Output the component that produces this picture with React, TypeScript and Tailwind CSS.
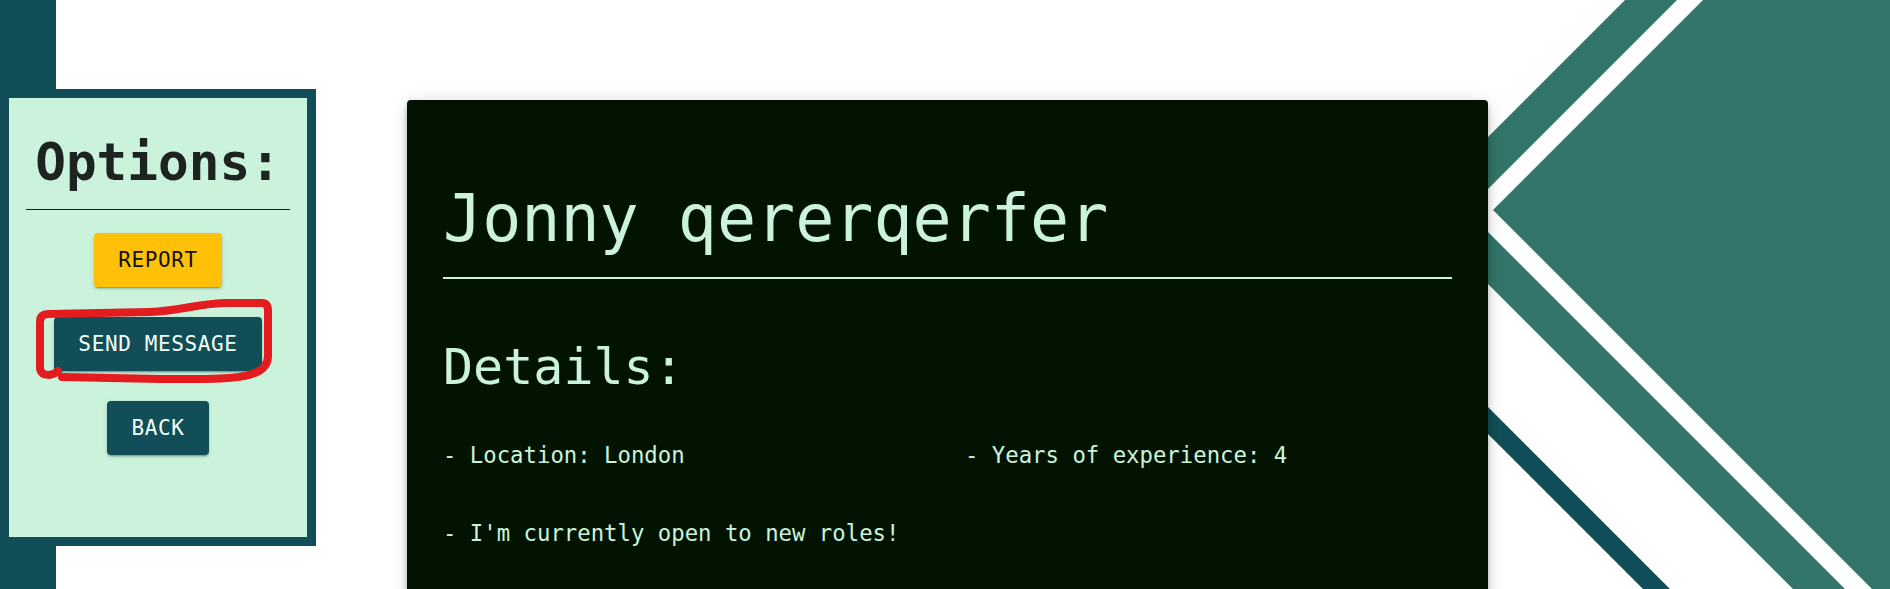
import React from "react";

const Scribble = () => (
  <svg
    className="pointer-events-none absolute left-[-22px] top-[-19px]"
    width={242}
    height={88}
    viewBox="32 298 242 88"
    fill="none"
  >
    <path
      d="M 58 371 C 53 376, 42 377, 40 369 L 40 322 Q 40 314, 49 314 L 150 312 C 180 311, 195 304, 225 303 L 262 303 Q 268 303, 268 311 L 268 356 Q 268 369, 252 374 C 235 380, 200 379, 160 379 L 62 377"
      stroke="#e31c1f"
      strokeWidth={8}
      strokeLinecap="round"
      strokeLinejoin="round"
    />
  </svg>
);

const Backdrop = () => (
  <svg
    className="pointer-events-none absolute right-0 top-0"
    width={490}
    height={589}
    viewBox="1400 0 490 589"
  >
    <polygon
      points="1625,0 1414.5,210.5 1793,589 1845,589 1466.5,210.5 1677,0"
      fill="#33756a"
    />
    <polygon points="1703,0 1493,210 1872,589 1890,589 1890,0" fill="#33756a" />
    <polygon points="1470,389 1670,589 1643,589 1470,416" fill="#124e57" />
  </svg>
);

const OptionButton = ({
  label,
  tone,
}: {
  label: string;
  tone: "amber" | "teal";
}) => (
  <button
    className={
      tone === "amber"
        ? "rounded-[4px] bg-[#ffc107] px-[24px] py-[14px] text-[21px] leading-[26px] tracking-[0.03em] text-[#111] shadow-[0_3px_1px_-2px_rgba(0,0,0,0.2),0_2px_2px_0_rgba(0,0,0,0.14),0_1px_5px_0_rgba(0,0,0,0.12)]"
        : "rounded-[4px] bg-[#124e57] px-[24px] py-[14px] text-[21px] leading-[26px] tracking-[0.03em] text-[#f4fff8] shadow-[0_3px_1px_-2px_rgba(0,0,0,0.2),0_2px_2px_0_rgba(0,0,0,0.14),0_1px_5px_0_rgba(0,0,0,0.12)]"
    }
  >
    {label}
  </button>
);

export default function App() {
  return (
    <div className="relative flex h-[589px] w-full overflow-hidden bg-white font-['DejaVu_Sans_Mono',monospace]">
      <Backdrop />

      <aside className="h-full w-[316px] shrink-0 bg-[linear-gradient(to_right,#124e57_56px,transparent_56px)] pt-[89px]">
        <div className="flex h-[457px] flex-col items-center border-[9px] border-[#124e57] bg-[#cbf3dc] pt-[39px]">
          <h2 className="text-[51px] font-bold leading-[51px] text-[#1d2420]">
            Options:
          </h2>
          <div className="mt-[21px] h-px w-[264px] bg-[#1b1b1b]" />
          <div className="mt-[23px] flex flex-col items-center gap-[30px]">
            <OptionButton label="REPORT" tone="amber" />
            <div className="relative">
              <OptionButton label="SEND MESSAGE" tone="teal" />
              <Scribble />
            </div>
            <OptionButton label="BACK" tone="teal" />
          </div>
        </div>
      </aside>

      <main className="relative z-10 ml-[91px] w-[1081px] shrink-0 pt-[100px]">
        <article className="h-[560px] rounded-[4px] bg-[#021302] px-[36px] pt-[86px] text-[#cbf3dc] shadow-[0_3px_5px_-1px_rgba(0,0,0,0.2),0_6px_10px_0_rgba(0,0,0,0.14),0_1px_18px_0_rgba(0,0,0,0.12)]">
          <h1 className="text-[65px] leading-[66px]">Jonny qererqerfer</h1>
          <div className="mt-[25px] h-[2px] bg-[#cbf3dc]" />
          <h3 className="mt-[63px] text-[50px] leading-[50px]">Details:</h3>
          <div className="mt-[52px] grid grid-cols-2 gap-x-[35px] gap-y-[56px] text-[22.3px] leading-[22px]">
            <p>- Location: London</p>
            <p>- Years of experience: 4</p>
            <p>- I'm currently open to new roles!</p>
          </div>
        </article>
      </main>
    </div>
  );
}
